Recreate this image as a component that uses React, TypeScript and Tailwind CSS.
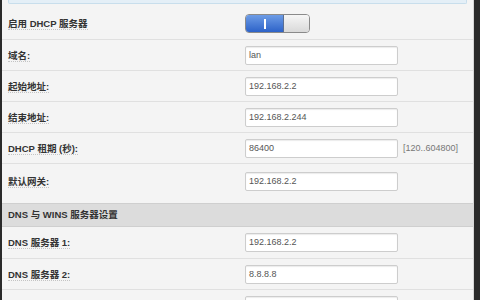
import React from 'react';

interface Field {
  label: string;
  value: string;
  hint?: string;
}

const dhcpFields: Field[] = [
  { label: '域名:', value: 'lan' },
  { label: '起始地址:', value: '192.168.2.2' },
  { label: '结束地址:', value: '192.168.2.244' },
  { label: 'DHCP 租期 (秒):', value: '86400', hint: '[120..604800]' },
];

const dnsFields: Field[] = [
  { label: 'DNS 服务器 1:', value: '192.168.2.2' },
  { label: 'DNS 服务器 2:', value: '8.8.8.8' },
  { label: '', value: '' },
];

const Label: React.FC<{ text: string }> = ({ text }) => (
  <div className="w-[243px] shrink-0 pl-[6px] h-[19px] flex items-center">
    {text && (
      <span className="font-bold text-[9.5px] leading-[11px] text-[#333] border-b border-dotted border-[#c4c4c4]">
        {text}
      </span>
    )}
  </div>
);

const TextBox: React.FC<{ value: string }> = ({ value }) => (
  <div className="w-[153px] h-[19px] shrink-0 bg-white border border-[#cdcdcd] rounded-[2px] shadow-[inset_0_1px_1px_rgba(0,0,0,0.08)] flex items-center pl-[3px] text-[9px] text-[#555]">
    {value}
  </div>
);

const Row: React.FC<{ field: Field; first?: boolean }> = ({ field, first }) => (
  <div className={`h-[31px] flex items-start pt-[6px] ${first ? '' : 'border-t border-[#e0e0e0]'}`}>
    <Label text={field.label} />
    <TextBox value={field.value} />
    {field.hint && (
      <div className="h-[19px] flex items-center ml-[5px] text-[9px] text-[#777]">{field.hint}</div>
    )}
  </div>
);

const Toggle: React.FC = () => (
  <div className="w-[65px] h-[19px] flex rounded-[4px] border border-[#8a8a8a] overflow-hidden">
    <div className="w-[38px] h-full bg-gradient-to-b from-[#6d9ce6] to-[#2d62c8] flex items-center justify-center border-r border-[#5a6e92]">
      <div className="w-[2px] h-[10px] bg-white" />
    </div>
    <div className="flex-1 h-full bg-gradient-to-b from-[#f6f6f6] to-[#d9d9d9]" />
  </div>
);

export default function App() {
  return (
    <div className="w-[480px] h-[300px] overflow-hidden bg-[#2a2a2a] font-[Liberation_Sans,Noto_Sans_CJK_SC,sans-serif]">
      <div className="ml-[2px] w-[472px] h-full bg-[#f4f4f4] border-r border-[#d6d6d6]">
        {/* info box bottom */}
        <div className="mx-[6px] h-[4px] bg-[#e4eff7] border-b border-x border-[#c8deec] rounded-b-[2px]" />

        <div className="mt-[4px]">
          <div className="h-[31px] flex items-start pt-[6px]">
            <Label text="启用 DHCP 服务器" />
            <Toggle />
          </div>
          {dhcpFields.map((f) => (
            <Row key={f.label} field={f} />
          ))}
          <div className="h-[40px] flex items-start pt-[8px] border-t border-[#e0e0e0]">
            <Label text="默认网关:" />
            <TextBox value="192.168.2.2" />
          </div>
        </div>

        <div className="h-[24px] bg-[#dcdcdc] border-y border-[#cfcfcf] flex items-center pl-[6px]">
          <span className="font-bold text-[9.5px] text-[#333]">DNS 与 WINS 服务器设置</span>
        </div>

        {dnsFields.map((f, i) => (
          <Row key={i} field={f} first={i === 0} />
        ))}
      </div>
    </div>
  );
}
